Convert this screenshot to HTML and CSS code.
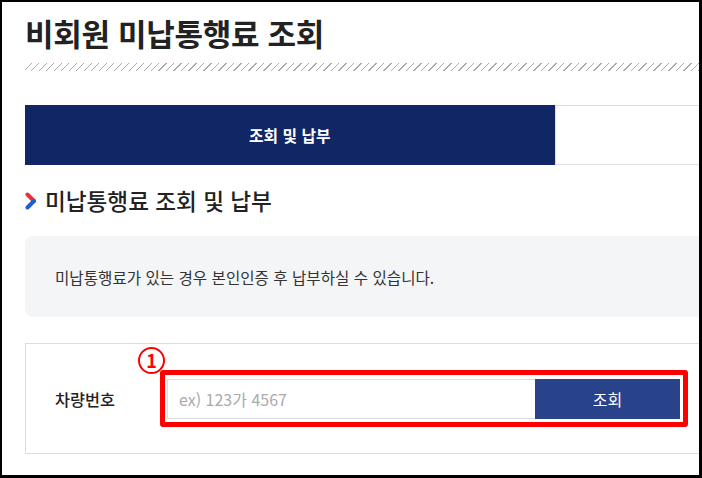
FILE: index.html
```html
<!DOCTYPE html>
<html lang="ko">
<head>
  <meta charset="UTF-8">
  <meta name="viewport" content="width=device-width, initial-scale=1.0">
  <title>비회원 미납통행료 조회</title>
  <link rel="stylesheet" href="styles.css">
</head>
<body>
  <div class="frame">
    <div class="page">
      <h1 class="page-title">비회원 미납통행료 조회</h1>
      <div class="hatch"></div>

      <div class="tabs">
        <div class="tab active">조회 및 납부</div>
        <div class="tab"></div>
      </div>

      <h2 class="section-title">
        <svg class="chevron" width="12" height="18" viewBox="0 0 12 18">
          <path d="M2.5 2.5 L9 9" stroke="#e8303a" stroke-width="4" stroke-linecap="round"/>
          <path d="M9 9 L2.5 15.5" stroke="#1b5fd1" stroke-width="4" stroke-linecap="round"/>
        </svg>
        미납통행료 조회 및 납부
      </h2>

      <div class="notice">
        미납통행료가 있는 경우 본인인증 후 납부하실 수 있습니다.
      </div>

      <div class="form-box">
        <label class="form-label" for="carNo">차량번호</label>
        <div class="input-group">
          <input id="carNo" class="car-input" type="text" placeholder="ex) 123가 4567">
          <button class="search-btn">조회</button>
          <!-- annotation overlay -->
          <div class="mark-box"></div>
          <span class="mark-num">1</span>
        </div>
      </div>
    </div>
  </div>
</body>
</html>
```

FILE: styles.css
```css
* {
  box-sizing: border-box;
}

html, body {
  margin: 0;
  height: 100%;
}

body {
  font-family: "Noto Sans CJK KR", "Noto Sans", sans-serif;
  color: #222;
  background: #fff;
}

.frame {
  height: 100vh;
  border-style: solid;
  border-color: #000;
  border-width: 2px 3px 3px 2px;
  overflow: hidden;
}

.page {
  width: 1060px;
  margin-left: 23px;
  padding-top: 11px;
}

.page-title {
  margin: 0;
  font-size: 31px;
  line-height: 40px;
  font-weight: 700;
  color: #222;
  letter-spacing: -0.3px;
}

.hatch {
  height: 8px;
  margin-top: 10px;
  background-image: repeating-linear-gradient(135deg, transparent 0 4.3px, #aaa 4.3px 5.3px);
}

.tabs {
  display: flex;
  margin-top: 34px;
  height: 60px;
}

.tab {
  flex: 1;
  display: flex;
  align-items: center;
  justify-content: center;
  font-size: 15.8px;
  font-weight: 700;
  border-top: 1px solid #ddd;
  border-bottom: 1px solid #ddd;
  border-left: 1px solid #ddd;
}

.tab.active {
  background: #112664;
  color: #fff;
  border: none;
}

.section-title {
  display: flex;
  align-items: center;
  gap: 8px;
  margin: 20px 0 0;
  height: 30px;
  font-size: 22.6px;
  font-weight: 500;
  color: #222;
}

.chevron {
  flex: none;
  margin-top: 2px;
}

.notice {
  margin-top: 21px;
  height: 81px;
  display: flex;
  align-items: center;
  padding-left: 30px;
  background: #f4f5f7;
  border-radius: 8px;
  font-size: 15.6px;
  color: #333;
}

.form-box {
  margin-top: 26px;
  height: 111px;
  border: 1px solid #ddd;
  display: flex;
  align-items: center;
  padding-left: 29px;
}

.form-label {
  width: 112px;
  font-size: 16.3px;
  font-weight: 500;
  color: #222;
}

.input-group {
  position: relative;
  display: flex;
  height: 40px;
}

.car-input {
  width: 368px;
  height: 40px;
  border: 1px solid #ddd;
  border-right: none;
  padding: 0 11px;
  font-family: inherit;
  font-size: 16px;
  outline: none;
}

.car-input::placeholder {
  color: #aaa;
}

.search-btn {
  width: 145px;
  height: 40px;
  border: none;
  background: #28438a;
  color: #fff;
  font-family: inherit;
  font-size: 16px;
}

.mark-box {
  position: absolute;
  top: -9px;
  left: -7px;
  right: -8px;
  bottom: -8px;
  border: 5px solid #ff0000;
  border-radius: 3px;
}

.mark-num {
  position: absolute;
  left: -29px;
  top: -32px;
  width: 27px;
  height: 27px;
  border: 2.5px solid #ff0000;
  border-radius: 50%;
  color: #ff0000;
  font-size: 18px;
  font-weight: 700;
  line-height: 22px;
  text-align: center;
  background: #fff;
}
```
